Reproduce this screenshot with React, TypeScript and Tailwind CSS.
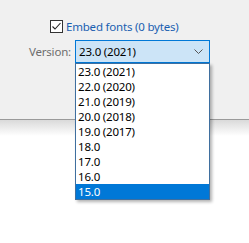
const versions = [
    '23.0 (2021)',
    '22.0 (2020)',
    '21.0 (2019)',
    '20.0 (2018)',
    '19.0 (2017)',
    '18.0',
    '17.0',
    '16.0',
    '15.0',
];

export default function App() {
    const selected = '15.0';

    return (
        <div className="relative h-[243px] w-[249px] overflow-hidden bg-white font-['Noto_Sans',sans-serif] text-[11.5px] leading-[15px] tracking-[-0.2px]">
            <div className="h-[120px] border-b border-[#9a9a9a] bg-[#f0f0f0] pl-[29px] pt-[20px]">
                <label className="ml-[21px] flex h-[13px] items-center gap-[3px]">
                    <span className="flex h-[13px] w-[13px] items-center justify-center border border-[#333] bg-white">
                        <svg width="11" height="11" viewBox="0 0 11 11" fill="none">
                            <path d="M1.5 5.5 L4 8 L9.5 2" stroke="#222" strokeWidth="1.1" />
                        </svg>
                    </span>
                    <span className="text-[#1a5fb0]">Embed fonts (0 bytes)</span>
                </label>

                <div className="mt-[7px] flex items-center">
                    <span className="w-[46px] text-[#6d6d6d]">Version:</span>
                    <div className="flex h-[23px] w-[135px] items-center justify-between border border-[#0078d7] bg-[#cce4f7] pl-[3px] pr-[6px]">
                        <span className="text-black">23.0 (2021)</span>
                        <svg width="9" height="5" viewBox="0 0 9 5" fill="none">
                            <path d="M0.5 0.5 L4.5 4.5 L8.5 0.5" stroke="#555" strokeWidth="1" />
                        </svg>
                    </div>
                </div>
            </div>
            <div className="h-[16px] bg-gradient-to-b from-[#dadada] to-white" />

            {/* open dropdown list */}
            <ul className="absolute left-[75px] top-[63px] w-[135px] border border-[#3f6f9f] bg-white shadow-[2px_2px_3px_rgba(0,0,0,0.3)]">
                {versions.map(v => (
                    <li
                        key={v}
                        className={
                            v === selected
                                ? 'h-[15px] bg-[#0078d7] pl-[2px] text-white'
                                : 'h-[15px] pl-[2px] text-black'
                        }
                    >
                        {v}
                    </li>
                ))}
            </ul>
        </div>
    );
}
